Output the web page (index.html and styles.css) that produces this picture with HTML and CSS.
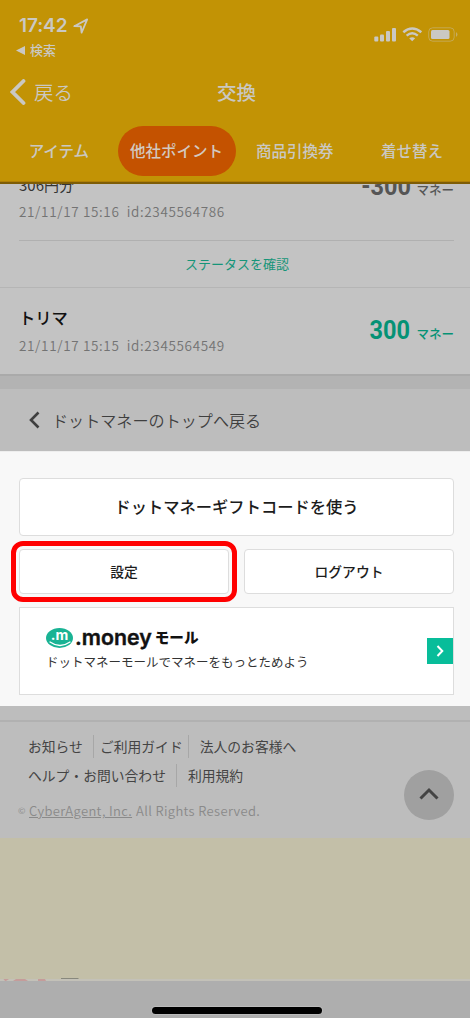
FILE: index.html
```html
<!DOCTYPE html>
<html lang="ja">
<head>
<meta charset="utf-8">
<title>交換</title>
<link rel="stylesheet" href="styles.css">
</head>
<body>
<div class="screen">
  <header class="header">
    <div class="status">
      <div class="status-left">
        <div class="clock"><span>17:42</span>
          <svg width="16" height="16" viewBox="0 0 16 16"><path d="M1.300 8.200 14.200 1.400 8.600 14.600 7.800 8.300Z" fill="none" stroke="currentColor" stroke-width="1.800" stroke-linejoin="round"/></svg>
        </div>
        <div class="return"><svg width="9" height="9" viewBox="0 0 9 9"><path d="M0 4.500 9 0V9Z" fill="currentColor"/></svg><span>検索</span></div>
      </div>
      <svg class="status-icons" width="85" height="16" viewBox="0 0 85 16">
        <g fill="currentColor">
          <rect x="0.300" y="9.500" width="4" height="5" rx="1"/><rect x="6" y="7.500" width="4" height="7" rx="1"/><rect x="12" y="4" width="4" height="10.500" rx="1"/><rect x="18" y="1" width="4" height="13.500" rx="1"/>
          <path d="M38.200 14.200 35.200 11.300Q38.200 9 41.200 11.300Z"/>
          <rect x="57" y="3" width="18.500" height="9" rx="1.500"/>
          <path d="M82 5Q85 7.500 82 10Z" opacity=".5"/>
        </g>
        <g fill="none" stroke="currentColor">
          <path d="M29.300 5.200Q38.200-2.200 47.300 5.200" stroke-width="2.500"/>
          <path d="M32.600 8.700Q38.200 4 43.800 8.700" stroke-width="2.400"/>
          <rect x="54.700" y=".8" width="25.500" height="13.400" rx="4" opacity=".4"/>
        </g>
      </svg>
    </div>
    <div class="titlebar">
      <div class="back"><svg width="16" height="26" viewBox="0 0 16 26"><path d="M13.500 2 2.500 13 13.500 24" fill="none" stroke="currentColor" stroke-width="3.800" stroke-linecap="round"/></svg><span>戻る</span></div>
      <h1 class="title">交換</h1>
    </div>
    <nav class="tabs">
      <span class="tab">アイテム</span>
      <span class="tab tab-active">他社ポイント</span>
      <span class="tab">商品引換券</span>
      <span class="tab">着せ替え</span>
    </nav>
  </header>

  <main class="history">
    <section class="entry entry-clipped">
      <div class="entry-info"><div class="entry-yen">306円分</div><div class="meta">21/11/17 15:16&nbsp; id:2345564786</div></div>
      <div class="amount"><span class="num">-300</span><span class="unit">マネー</span></div>
    </section>
    <a class="status-link">ステータスを確認</a>
    <section class="entry entry-full">
      <div class="entry-info"><div class="entry-name">トリマ</div><div class="meta">21/11/17 15:15&nbsp; id:2345564549</div></div>
      <div class="amount amount-green"><span class="num">300</span><span class="unit">マネー</span></div>
    </section>
  </main>
  <div class="band"></div>
  <div class="top-link"><svg width="11" height="18" viewBox="0 0 11 18"><path d="M9.500 1.500 2 9 9.500 16.500" fill="none" stroke="currentColor" stroke-width="2.600"/></svg><span>ドットマネーのトップへ戻る</span></div>

  <section class="actions">
    <div class="button button-gift">ドットマネーギフトコードを使う</div>
    <div class="button-row">
      <div class="button highlighted">設定</div>
      <div class="button">ログアウト</div>
    </div>
    <div class="mall">
      <div class="mall-copy">
        <div class="logo">
          <div class="logo-mark"><span>.m</span><svg width="22" height="6" viewBox="0 0 22 6"><path d="M1 1Q11 8 21 1" fill="none" stroke="#fff" stroke-width="1.300" stroke-linecap="round"/></svg></div>
          <span class="logo-money">.money</span><span class="logo-mall">モール</span>
        </div>
        <div class="mall-text">ドットマネーモールでマネーをもっとためよう</div>
      </div>
      <div class="mall-arrow"><svg width="8" height="12" viewBox="0 0 8 12"><path d="M1.500 1 6.300 6 1.500 11" fill="none" stroke="#fff" stroke-width="2"/></svg></div>
    </div>
  </section>

  <footer class="footer">
    <div class="footer-main">
      <div class="links"><span>お知らせ</span><span class="sep sep-a">ご利用ガイド</span><span class="sep sep-b">法人のお客様へ</span></div>
      <div class="links"><span>ヘルプ・お問い合わせ</span><span class="sep sep-c">利用規約</span></div>
      <div class="copyright"><span class="copy-mark">©</span><span class="company">CyberAgent, Inc.</span><span class="rights">All Rights Reserved.</span></div>
    </div>
    <div class="page-top"><svg width="20" height="13" viewBox="0 0 20 13"><path d="M1.500 11.500 10 3 18.500 11.500" fill="none" stroke="currentColor" stroke-width="3"/></svg></div>
  </footer>
  <div class="banner"><svg width="80" height="3" viewBox="0 0 80 3"><path d="M3.500 1H9L6 3H5ZM13 3 16 1H25L28 3ZM38 1H45L46 3H38Z" fill="#c59c9a"/><path d="M61 .5H78.500" stroke="#88887d"/></svg></div>
  <div class="bottom"><div class="home-bar"></div></div>
</div>
</body>
</html>
```

FILE: styles.css
```css
* { box-sizing: border-box; }
body { margin: 0; font-family: "Noto Sans CJK JP", sans-serif; background: #c3c3c3; }
svg { display: block; flex: none; }
.screen { width: 470px; height: 1018px; overflow: hidden; display: flex; flex-direction: column; white-space: nowrap; }
.screen > * { flex: none; }

.header { height: 184px; background: #c29305; color: #cac8c3; border-bottom: 2px solid #7e5d06; box-shadow: inset 0 -1px #b08005; }
.status { height: 63px; display: flex; justify-content: space-between; padding: 14px 11px 0 16px; }
.clock { display: flex; align-items: center; gap: 6px; height: 23px; padding-left: 3px; font: 600 19px/23px Inter, sans-serif; letter-spacing: -0.1px; }
.return { display: flex; align-items: center; gap: 5px; height: 19px; margin-top: 4px; font-size: 13px; font-weight: 500; line-height: 19px; }
.return span { margin-top: -2px; }
.status-icons { margin-top: 13px; }
.titlebar { height: 56px; display: grid; grid-template-columns: 1fr auto 1fr; align-items: center; padding: 2px 7px 0 10px; }
.back { display: flex; align-items: center; gap: 8px; font-size: 19.5px; line-height: 28px; font-weight: 350; }
.title { margin: 0; font-size: 19.5px; line-height: 28px; font-weight: 500; }
.tabs { height: 64px; display: flex; align-items: center; font-size: 15.5px; font-weight: 500; }
.tab { width: 118px; height: 50px; display: flex; align-items: center; justify-content: center; padding-bottom: 3px; }
.tab:nth-child(3) { width: 119px; }
.tab:nth-child(4) { width: 116px; }
.tab-active { background: #c45200; border-radius: 25px; color: #d3c9c0; }

.history { height: 192px; background: #c3c3c3; color: #555; border-bottom: 2px solid #aaa; }
.entry { display: flex; justify-content: space-between; }
.entry-clipped { height: 57px; margin: 0 16px 0 19px; border-bottom: 1px solid #b0b0b0; overflow: hidden; }
.entry-clipped .entry-info { margin-top: -10px; }
.entry-yen { font-size: 15px; line-height: 22px; color: #333; }
.meta { font-size: 13.500px; line-height: 20px; color: #737373; font-weight: 350; letter-spacing: 0.650px; }
.entry-clipped .meta { margin-top: 5px; }
.entry-clipped .amount { margin-top: -14px; }
.status-link { display: block; height: 47px; border-bottom: 1px solid #b5b5b5; text-align: center; font-size: 13px; line-height: 46px; color: #169579; padding-left: 4px; }
.entry-full { height: 86px; padding: 17px 16px 0 19px; }
.entry-name { font-size: 16.300px; line-height: 24px; font-weight: 500; color: #111; }
.entry-full .meta { margin-top: 6px; }
.amount { display: flex; align-items: baseline; gap: 6px; height: 34px; }
.entry-full .amount { margin-top: 9px; }
.num { font: 700 25px/34px Roboto, sans-serif; letter-spacing: 0; transform: scaleX(0.94); transform-origin: right; }
.unit { font-size: 12.500px; line-height: 20px; font-weight: 500; }
.amount-green { color: #059275; }

.band { height: 13px; background: #b3b3b3; }
.top-link { height: 62px; display: flex; align-items: center; gap: 12px; padding: 0 0 1px 29px; background: #bdbdbd; color: #3f3f3f; font-size: 16.100px; font-weight: 350; }

.actions { height: 255px; padding: 26px 16px 0 19px; background: #f8f8f8; border-top: 1px solid #eee; }
.button { display: flex; align-items: center; justify-content: center; padding-bottom: 2px; border: 1px solid #ddd; border-radius: 4px; background: #fff; color: #1c1c1c; font-size: 13.800px; font-weight: 500; }
.button-gift { height: 58px; font-size: 16.300px; }
.button-row { display: grid; grid-template-columns: 210px 210px; justify-content: space-between; margin-top: 13px; }
.button-row .button { height: 45px; }
.highlighted { outline: 5px solid #f00; outline-offset: 3px; }
.mall { height: 88px; display: flex; align-items: center; justify-content: space-between; margin-top: 13px; padding-left: 26px; border: 1px solid #ddd; background: #fff; }
.mall-copy { padding-bottom: 4px; }
.logo { display: flex; align-items: center; height: 24px; color: #111; }
.logo-mark { width: 27px; height: 20px; border-radius: 50%; background: #19b394; color: #fff; font: 700 14px/13px Inter, sans-serif; display: flex; flex-direction: column; align-items: center; }
.logo-money { margin-left: 2px; font: 600 21.300px/24px Inter, sans-serif; -webkit-text-stroke: 0.4px #111; margin-top: -2px; }
.logo-mall { margin-left: 3px; font-size: 14.600px; font-weight: 900; line-height: 24px; margin-top: -2px; }
.mall-text { font-size: 12.500px; line-height: 20px; color: #333; margin-top: 2px; }
.mall-arrow { width: 26px; height: 26px; display: flex; align-items: center; justify-content: center; background: #08bd9a; }

.footer { height: 132px; padding: 14px 16px 0 28px; background: linear-gradient(#b1b1b1, #b1b1b1) 0 14px / 100% 2px no-repeat #bdbdbd; display: flex; justify-content: space-between; color: #444; }
.footer-main { padding-top: 12px; }
.links { display: flex; height: 29px; font-size: 13.800px; line-height: 28px; }
.sep { height: 23px; margin-top: 3px; line-height: 22px; border-left: 1px solid #a7a7a7; }
.sep-a { margin-left: 10px; padding-left: 6px; }
.sep-b { margin-left: 5px; padding-left: 11px; }
.sep-c { margin-left: 10px; padding-left: 11px; }
.copyright { display: flex; align-items: center; height: 24px; margin: 9px 0 0 -10px; color: #8a8a8a; font-size: 13px; font-weight: 350; line-height: 18px; letter-spacing: 0.350px; }
.copy-mark { width: 11px; font-size: 9px; }
.company { text-decoration: underline; }
.rights { margin-left: 4px; }
.page-top { width: 50px; height: 50px; margin-top: 50px; border-radius: 50%; background: #a0a0a0; display: flex; align-items: center; justify-content: center; padding-bottom: 3px; }

.banner { height: 143px; background: #c3bfa8; border-bottom: 2px solid #c3c1b8; display: flex; align-items: flex-end; }
.banner svg { margin-bottom: -2px; }
.bottom { height: 37px; background: #aeaeae; display: flex; justify-content: center; padding: 26px 0 0 4px; }
.home-bar { width: 170px; height: 7px; border-radius: 4px; background: #000; box-shadow: 0 0 0 1px #bbb; }
```
